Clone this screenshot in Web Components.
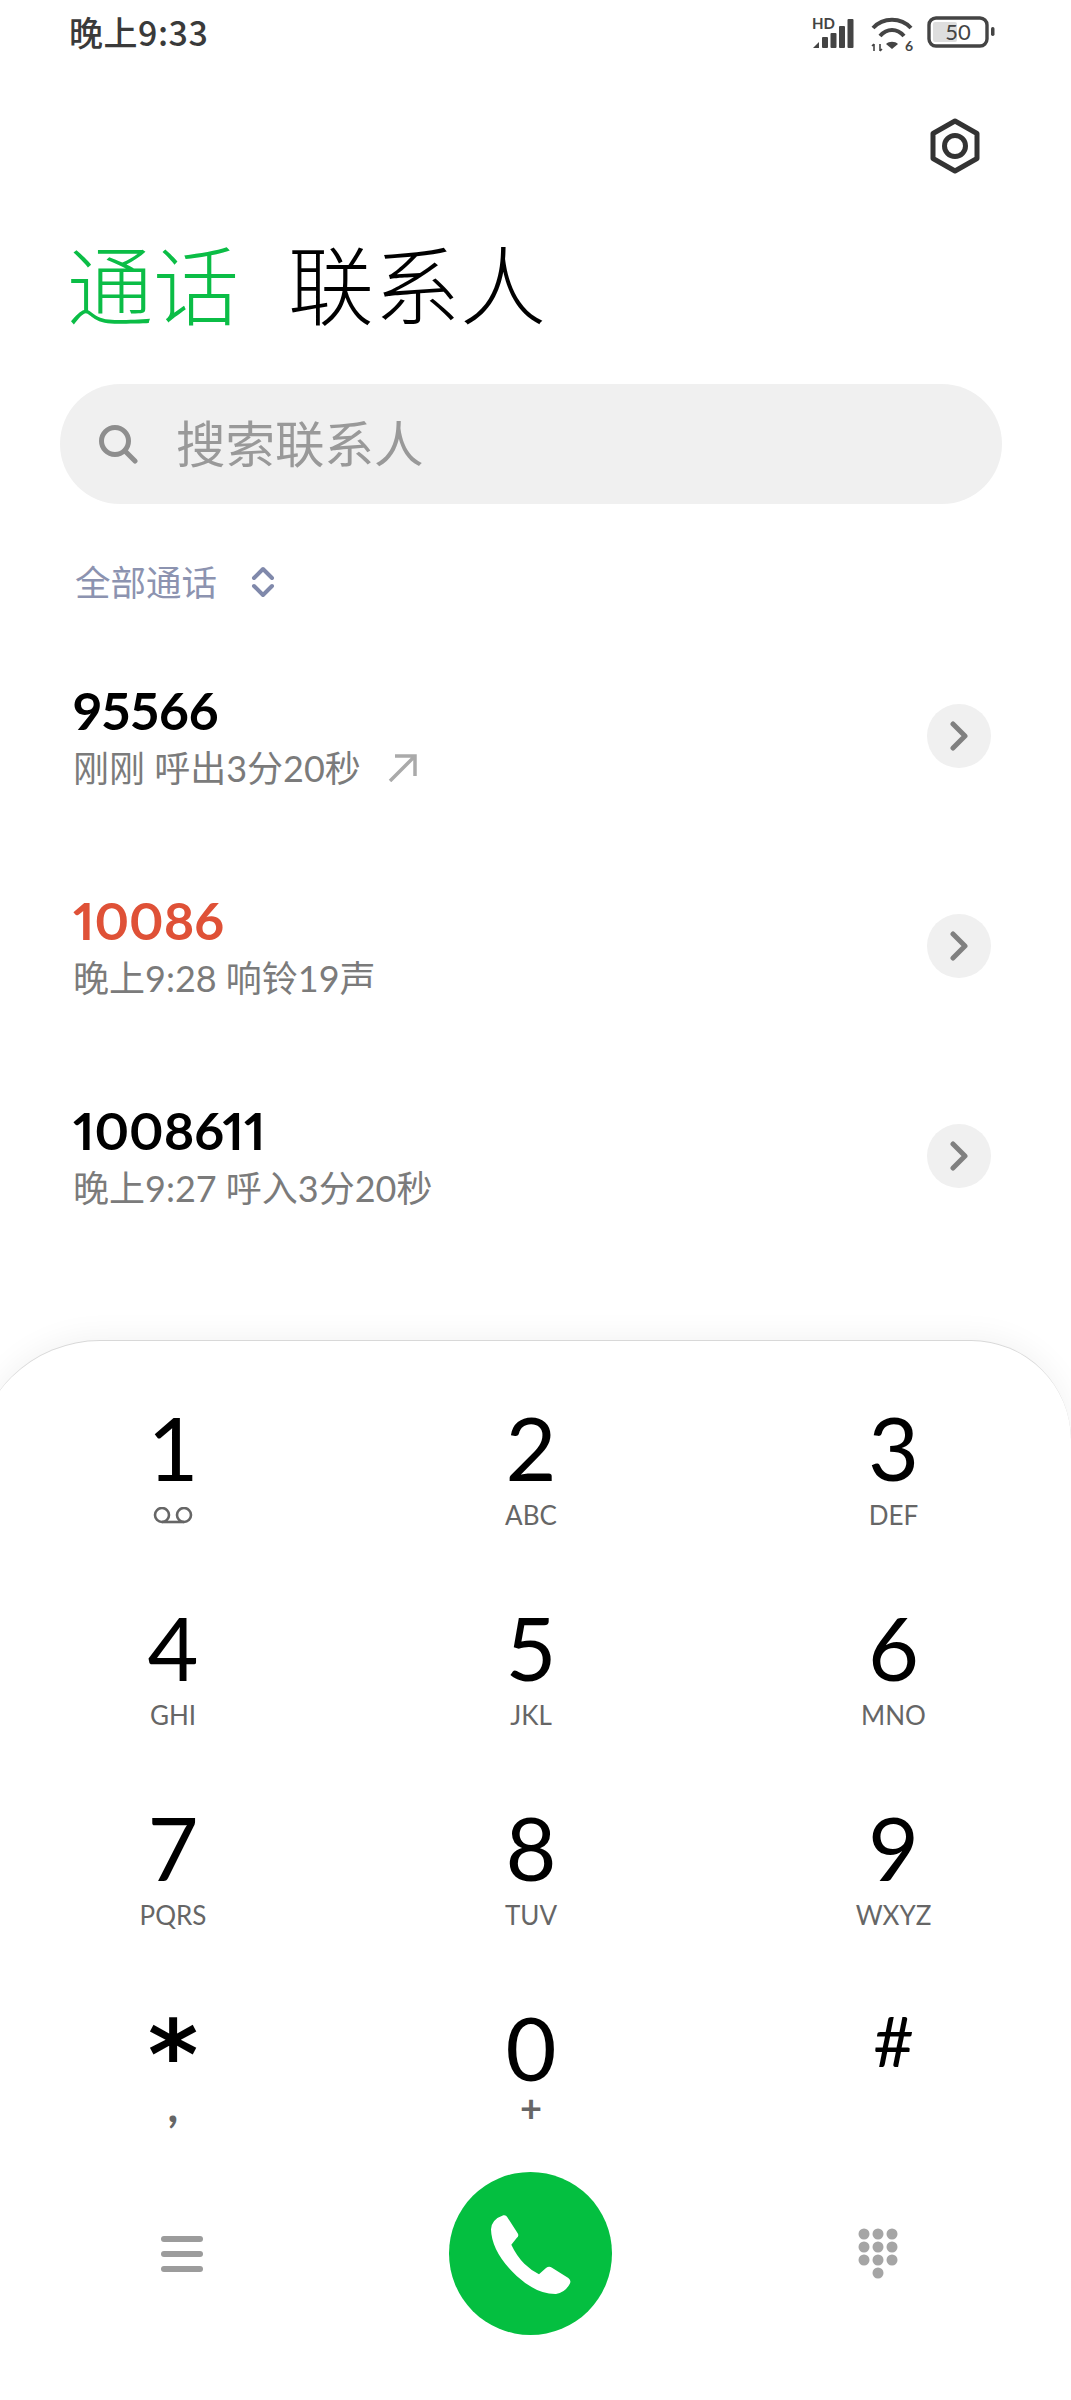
<!DOCTYPE html>
<html lang="zh">
<head>
<meta charset="utf-8">
<title>通话</title>
<style>
  html, body { margin: 0; background: #fff; }
  body { font-family: Lato, "Noto Sans CJK SC", sans-serif; }
</style>
</head>
<body>
<phone-app></phone-app>
<script>
class StatusBar extends HTMLElement {
  constructor() {
    super();
    this.attachShadow({ mode: 'open' }).innerHTML = `
      <style>
      :host { display: flex; align-items: center; justify-content: space-between; box-sizing: border-box; height: 68px; padding: 0 76px 5px 69px; color: #3a3a3a; }
      .time { font-family: "Noto Sans CJK SC", sans-serif; font-size: 34px; font-weight: 500; letter-spacing: .5px; }
      .icons { display: flex; align-items: center; gap: 14px; }
      .signal { margin-right: 3px; }
      svg { display: block; overflow: visible; }
      text { font-family: Lato, sans-serif; }
      </style>
      <span class="time">晚上9:33</span>
      <div class="icons">
        <svg class="signal" width="42" height="36" viewBox="0 0 42 36" fill="#444">
          <text x="0" y="15" font-size="15" font-weight="700">HD</text>
          <path d="M1 34l6-6v6z"/>
          <rect x="10" y="23" width="6" height="11" rx="1"/>
          <rect x="18.500" y="19" width="6" height="15" rx="1"/>
          <rect x="27" y="12" width="6" height="22" rx="1"/>
          <rect x="35.500" y="5" width="6" height="29" rx="1"/>
        </svg>
        <svg width="42" height="36" viewBox="0 0 42 36" fill="none" stroke="#444" stroke-width="4">
          <path d="M2 14C12 3 30 3 40 14"/>
          <path d="M9 22C16 14 26 14 33 22"/>
          <path d="M21 35l-6-5c3-3 9-3 12 0z" fill="#444" stroke="none"/>
          <path d="M3 30v7M1 32l2-2M9 30v7M9 37l2-2" stroke-width="1.600"/>
          <text x="34" y="37" font-size="14" font-weight="700" fill="#444" stroke="none">6</text>
        </svg>
        <svg width="68" height="32" viewBox="0 0 68 32">
          <rect x="2" y="2" width="58" height="28" rx="7" fill="#fff" stroke="#444" stroke-width="3.400"/>
          <rect x="6" y="6" width="24" height="20" rx="2" fill="#dedede"/>
          <rect x="64" y="11" width="3.500" height="9" rx="1.700" fill="#444"/>
          <text x="31" y="24" font-size="22" fill="#444" text-anchor="middle">50</text>
        </svg>
      </div>`;
  }
}

class SettingsRow extends HTMLElement {
  constructor() {
    super();
    this.attachShadow({ mode: 'open' }).innerHTML = `
      <style>
      :host { display: flex; justify-content: flex-end; padding: 50px 89px 0 0; }
      svg { display: block; }
      </style>
      <svg width="54" height="56" viewBox="0 0 54 56" fill="none" stroke="#333" stroke-width="5" stroke-linejoin="round">
        <path d="M27 3l22 12.500v25L27 53 5 40.500v-25z"/>
        <circle cx="27" cy="28" r="10.500"/>
      </svg>`;
  }
}

class CallTabs extends HTMLElement {
  constructor() {
    super();
    this.attachShadow({ mode: 'open' }).innerHTML = `
      <style>
      :host { display: flex; gap: 49px; margin-top: 58px; height: 107px; padding-left: 67px; font-size: 86px; line-height: 100px; font-weight: 300; color: #000; font-family: "Noto Sans CJK SC", sans-serif; }
      .on { color: #0bbd46; }
      </style>
      <span class="on">通话</span>
      <span>联系人</span>`;
  }
}

class SearchBox extends HTMLElement {
  constructor() {
    super();
    this.attachShadow({ mode: 'open' }).innerHTML = `
      <style>
      :host { display: flex; align-items: center; gap: 38px; box-sizing: border-box; height: 120px; margin: 45px 69px 0 60px; padding: 0 0 5px 38px; border-radius: 60px; background: #f0f0f0; color: #999; font-size: 49.500px; font-family: "Noto Sans CJK SC", sans-serif; }
      svg { display: block; flex: none; margin-top: 5px; }
      </style>
      <svg width="40" height="40" viewBox="0 0 40 40" fill="none" stroke="#8e8e8e" stroke-width="5" stroke-linecap="round">
        <circle cx="17" cy="17" r="13.500"/>
        <path d="M27 27l10 10"/>
      </svg>
      <slot></slot>`;
  }
}

class CallFilter extends HTMLElement {
  constructor() {
    super();
    this.attachShadow({ mode: 'open' }).innerHTML = `
      <style>
      :host { display: flex; align-items: center; gap: 34px; box-sizing: border-box; height: 50px; margin-top: 54px; padding: 0 0 5px 75px; color: #8c93b0; font-size: 35.500px; font-family: "Noto Sans CJK SC", sans-serif; }
      svg { display: block; margin-top: 2px; }
      </style>
      <slot></slot>
      <svg width="24" height="32" viewBox="0 0 24 32" fill="none" stroke="#8089ab" stroke-width="4" stroke-linecap="round" stroke-linejoin="round">
        <path d="M3 12l9-9 9 9M3 20l9 9 9-9"/>
      </svg>`;
  }
}

class CallRow extends HTMLElement {
  constructor() {
    super();
    const missed = this.hasAttribute('missed');
    const arrow = this.hasAttribute('outgoing')
      ? `<svg width="30" height="28" viewBox="0 0 30 28" fill="none" stroke="#aaa" stroke-width="3.500"><path d="M8 2h20v20M27 3L3 27"/></svg>`
      : '';
    this.attachShadow({ mode: 'open' }).innerHTML = `
      <style>
      :host { display: flex; justify-content: space-between; height: 210px; box-sizing: border-box; padding: 48px 80px 0 73px; }
      .name { font-size: 52px; line-height: 61px; font-weight: 700; font-variant-numeric: proportional-nums; color: ${missed ? '#df5137' : '#000'}; }
      .meta { display: flex; align-items: center; gap: 26px; font-size: 36px; line-height: 54px; color: #7b7b7b; }
      .more { display: flex; align-items: center; justify-content: center; width: 64px; height: 64px; margin-top: 24px; border-radius: 50%; background: #f0f0f0; }
      svg { display: block; }
      </style>
      <div>
        <div class="name">${this.getAttribute('number')}</div>
        <div class="meta"><span><slot></slot></span>${arrow}</div>
      </div>
      <div class="more">
        <svg width="20" height="30" viewBox="0 0 20 30" fill="none" stroke="#808080" stroke-width="5" stroke-linecap="round" stroke-linejoin="round">
          <path d="M4 3l12 12L4 27"/>
        </svg>
      </div>`;
  }
}

class DialKey extends HTMLElement {
  constructor() {
    super();
    this.attachShadow({ mode: 'open' }).innerHTML = `
      <style>
      :host { display: flex; flex-direction: column; align-items: center; }
      .digit { height: 100px; font-family: var(--digit-font, Lato), sans-serif; font-size: var(--digit-size, 88px); font-weight: var(--digit-weight, 400); line-height: var(--digit-lh, 94px); color: #000; }
      .sub { display: flex; align-items: flex-start; justify-content: center; height: 30px; font-size: var(--sub-size, 26px); font-weight: var(--sub-weight, 400); line-height: var(--sub-lh, 30px); color: #666; }
      </style>
      <div class="digit">${this.getAttribute('digit')}</div>
      <div class="sub"><slot></slot></div>`;
  }
}

class DialPad extends HTMLElement {
  constructor() {
    super();
    this.attachShadow({ mode: 'open' }).innerHTML = `
      <style>
      :host { display: grid; grid-template-columns: 346px 370px 355px; grid-template-rows: 200px 200px 200px 172px; }
      </style>
      <slot></slot>`;
  }
}

class CallBar extends HTMLElement {
  constructor() {
    super();
    this.attachShadow({ mode: 'open' }).innerHTML = `
      <style>
      :host { display: grid; grid-template-columns: 363px 334px 364px; align-items: center; justify-items: center; }
      svg { display: block; }
      .call { display: flex; align-items: center; justify-content: center; width: 163px; height: 163px; border-radius: 50%; background: #04bf40; }
      .menu { display: flex; flex-direction: column; gap: 9px; }
      .menu i { display: block; width: 42px; height: 6px; border-radius: 3px; background: #9c9c9c; }
      </style>
      <div class="menu"><i></i><i></i><i></i></div>
      <div class="call">
        <svg width="120" height="115" viewBox="0 0 360 345" fill="#fff">
          <path d="M100 58Q108 56 112 64L143 112Q148 120 140 126L124 146Q140 180 163 203Q185 224 207 235L228 216Q237 209 246 215L295 246Q305 254 299 264Q285 290 258 294Q200 295 140 240Q65 170 63 100Q65 70 100 58Z"/>
        </svg>
      </div>
      <svg width="42" height="52" viewBox="0 0 42 52" fill="#a5a5a5">
        <circle cx="6" cy="6" r="5.500"/><circle cx="20" cy="6" r="5.500"/><circle cx="34" cy="6" r="5.500"/>
        <circle cx="6" cy="19" r="5.500"/><circle cx="20" cy="19" r="5.500"/><circle cx="34" cy="19" r="5.500"/>
        <circle cx="6" cy="32" r="5.500"/><circle cx="20" cy="32" r="5.500"/><circle cx="34" cy="32" r="5.500"/>
        <circle cx="20" cy="45" r="5.500"/>
      </svg>`;
  }
}

class DialSheet extends HTMLElement {
  constructor() {
    super();
    this.attachShadow({ mode: 'open' }).innerHTML = `
      <style>
      :host { display: block; height: 1060px; box-sizing: border-box; margin: auto 0 0 -25px; padding: 59px 0 0 25px; background: #fff; border-top: 1px solid #d8d8d8; border-radius: 125px 100px 0 0; box-shadow: 0 -4px 30px rgba(0,0,0,.05); }
      </style>
      <slot></slot>`;
  }
}

class PhoneApp extends HTMLElement {
  constructor() {
    super();
    this.attachShadow({ mode: 'open' }).innerHTML = `
      <style>
      :host { display: flex; flex-direction: column; height: 2400px; overflow: hidden; }
      .list { margin-top: 24px; }
      .star { --digit-font: "DejaVu Sans"; --digit-size: 96px; --digit-weight: 700; --digit-lh: 112px; --sub-size: 46px; --sub-weight: 700; --sub-lh: 10px; }
      .plus { --sub-size: 38px; --sub-weight: 700; --sub-lh: 14px; }
      .hash { --digit-size: 70px; --digit-lh: 80px; }
      .vm { display: block; margin-top: 7px; }
      </style>
      <status-bar></status-bar>
      <settings-row></settings-row>
      <call-tabs></call-tabs>
      <search-box>搜索联系人</search-box>
      <call-filter>全部通话</call-filter>
      <div class="list">
        <call-row number="95566" outgoing>刚刚 呼出3分20秒</call-row>
        <call-row number="10086" missed>晚上9:28 响铃19声</call-row>
        <call-row number="1008611">晚上9:27 呼入3分20秒</call-row>
      </div>
      <dial-sheet>
        <dial-pad>
          <dial-key digit="1"><svg class="vm" width="40" height="18" viewBox="0 0 40 18" fill="none" stroke="#666" stroke-width="2.600"><circle cx="9" cy="8" r="7"/><circle cx="31" cy="8" r="7"/><path d="M9 15h22"/></svg></dial-key>
          <dial-key digit="2">ABC</dial-key>
          <dial-key digit="3">DEF</dial-key>
          <dial-key digit="4">GHI</dial-key>
          <dial-key digit="5">JKL</dial-key>
          <dial-key digit="6">MNO</dial-key>
          <dial-key digit="7">PQRS</dial-key>
          <dial-key digit="8">TUV</dial-key>
          <dial-key digit="9">WXYZ</dial-key>
          <dial-key class="star" digit="*">,</dial-key>
          <dial-key class="plus" digit="0">+</dial-key>
          <dial-key class="hash" digit="#"></dial-key>
        </dial-pad>
        <call-bar></call-bar>
      </dial-sheet>`;
  }
}

customElements.define('status-bar', StatusBar);
customElements.define('settings-row', SettingsRow);
customElements.define('call-tabs', CallTabs);
customElements.define('search-box', SearchBox);
customElements.define('call-filter', CallFilter);
customElements.define('call-row', CallRow);
customElements.define('dial-key', DialKey);
customElements.define('dial-pad', DialPad);
customElements.define('call-bar', CallBar);
customElements.define('dial-sheet', DialSheet);
customElements.define('phone-app', PhoneApp);
</script>
</body>
</html>
